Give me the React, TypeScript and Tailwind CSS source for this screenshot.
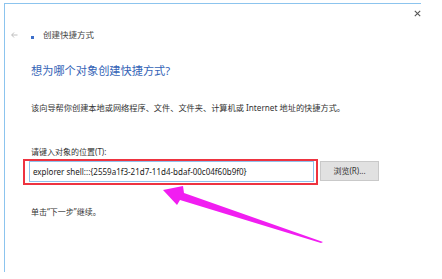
import React from "react";

const font = { fontFamily: '"Noto Sans", "Noto Sans CJK SC", sans-serif' };

function BackArrow() {
  return (
    <svg width="7" height="6" viewBox="0 0 7 6" className="block">
      <path d="M3 0.5 L0.7 3 L3 5.5 M0.7 3 H6.5" fill="none" stroke="#b9b9b9" strokeWidth="0.9" />
    </svg>
  );
}

function CloseX() {
  return (
    <svg width="7" height="7" viewBox="0 0 7 7" className="block">
      <path d="M0.8 0.8 L6.2 6.2 M6.2 0.8 L0.8 6.2" stroke="#555" strokeWidth="1.1" />
    </svg>
  );
}

function PinkArrow() {
  return (
    <svg
      width="442"
      height="279"
      viewBox="0 0 442 279"
      className="pointer-events-none absolute left-0 top-0"
    >
      <polygon
        points="163,190 183,186 184,193 323,242 321,243 180,200 177,205"
        fill="#f11ef1"
      />
    </svg>
  );
}

export default function App() {
  return (
    <div className="relative h-[279px] w-[442px] overflow-hidden bg-white text-[#333]" style={font}>
      <div className="pl-[4px] pt-[3px]">
        <div className="relative h-[269px] w-[417px] border-l border-t border-[#8cc4ee]">
          <div className="absolute right-[0px] top-[6px]">
            <CloseX />
          </div>

          <div className="mt-[24px] flex h-[14px] items-center">
            <div className="ml-[6px]">
              <BackArrow />
            </div>
            <div className="ml-[13px] mt-[4px] h-[3px] w-[3px] bg-[#3d6fc9]" />
            <div className="ml-[9px] text-[8.5px] leading-[14px] text-[#444]">创建快捷方式</div>
          </div>

          <div className="pl-[26px]">
            <div className="mt-[21px] h-[16px] text-[11.2px] leading-[16px] text-[#3463b6]">
              想为哪个对象创建快捷方式?
            </div>
            <div className="mt-[23px] h-[12px] text-[8.2px] leading-[12px]">
              该向导帮你创建本地或网络程序、文件、文件夹、计算机或 Internet 地址的快捷方式。
            </div>
            <div className="mt-[32px] h-[12px] text-[8px] leading-[12px]">请键入对象的位置(T):</div>

            <div className="ml-[-8px] mt-[1px] flex items-start">
              <div className="flex h-[26px] w-[295px] items-start border-2 border-[#ee3340] pl-[4px] pr-[2px]">
                <div className="h-[21px] w-[285px] border border-[#8fc1ec] bg-white pl-[3px] text-[8px] leading-[19px] text-[#222]">
                  explorer shell:::{"{"}2559a1f3-21d7-11d4-bdaf-00c04f60b9f0{"}"}
                </div>
              </div>
              <div className="ml-[2px] mt-[2px] flex h-[20px] w-[59px] items-center justify-center border border-[#c9c9c9] bg-[#e1e1e1] text-[8px] text-[#333]">
                浏览(R)...
              </div>
            </div>

            <div className="mt-[21px] h-[12px] text-[8px] leading-[12px]">单击“下一步”继续。</div>
          </div>
        </div>
      </div>
      <PinkArrow />
    </div>
  );
}
